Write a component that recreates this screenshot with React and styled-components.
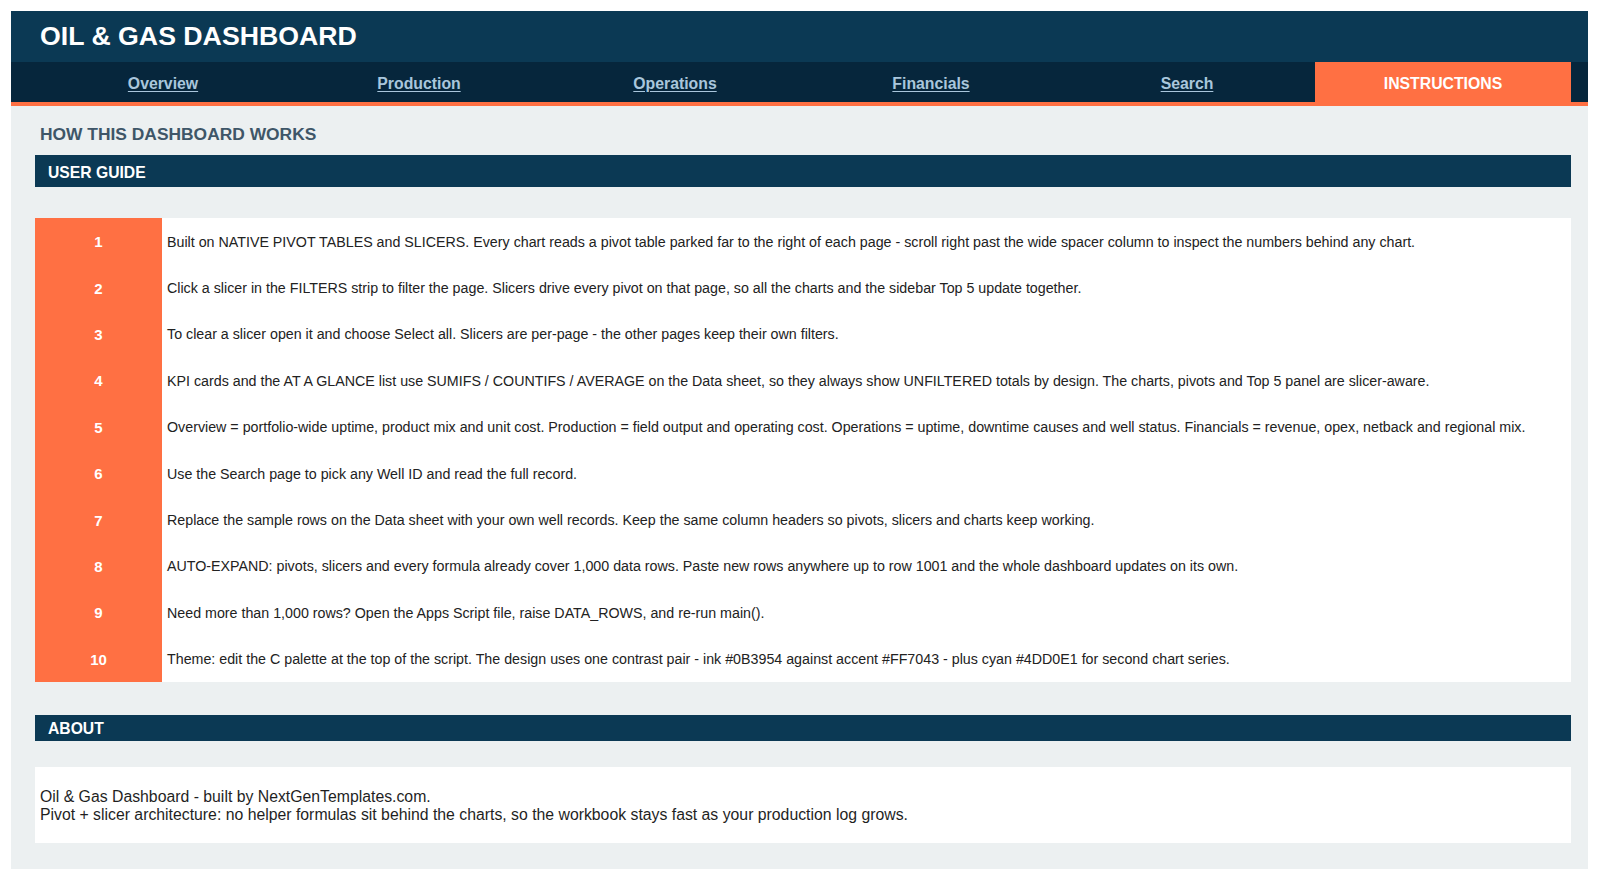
import React from 'react';
import styled, { createGlobalStyle } from 'styled-components';

const GlobalStyle = createGlobalStyle`
  body {
    margin: 0;
    background: #ffffff;
    font-family: "Liberation Sans", Arial, sans-serif;
  }
`;

const Frame = styled.div`
  margin: 11px;
  width: 1577px;
  background: #ECF0F1;
  padding-bottom: 26px;
`;

const TitleBar = styled.header`
  height: 51px;
  display: flex;
  align-items: center;
  padding-left: 29px;
  background: #0B3954;
`;

const Title = styled.h1`
  margin: 0;
  color: #ffffff;
  font-size: 26.7px;
  font-weight: 700;
`;

const NavBar = styled.nav`
  display: flex;
  height: 40px;
  padding-left: 24px;
  background: #06263C;
  border-bottom: 4px solid #FF7043;
`;

const Tab = styled.a`
  width: 256px;
  display: flex;
  align-items: center;
  justify-content: center;
  padding-top: 3px;
  font-size: 15.8px;
  font-weight: 700;
  color: ${(p) => (p.$active ? '#ffffff' : '#A9C6DC')};
  background: ${(p) => (p.$active ? '#FF7043' : 'transparent')};
  text-decoration: ${(p) => (p.$active ? 'none' : 'underline')};
  text-underline-offset: 2px;
`;

const Content = styled.main`
  padding: 18px 17px 0 24px;
`;

const PageHeading = styled.h2`
  margin: 0 0 11px 5px;
  font-size: 17.4px;
  line-height: 20px;
  font-weight: 700;
  color: #3E5668;
`;

const SectionBar = styled.div`
  height: ${(p) => p.$height}px;
  margin-top: ${(p) => p.$gap || 0}px;
  display: flex;
  align-items: center;
  padding: ${(p) => p.$nudge}px 0 0 13px;
  box-sizing: border-box;
  background: #0B3954;
  color: #ffffff;
  font-size: 15.7px;
  font-weight: 700;
`;

const GuideList = styled.div`
  margin-top: 31px;
  display: grid;
  grid-auto-rows: 46.4px;
  background: #ffffff;
`;

const GuideRow = styled.div`
  display: grid;
  grid-template-columns: 127px 1fr;
  align-items: stretch;
`;

const StepNumber = styled.div`
  display: flex;
  align-items: center;
  justify-content: center;
  padding-top: 1px;
  background: #FF7043;
  color: #ffffff;
  font-size: 15px;
  font-weight: 700;
`;

const StepText = styled.div`
  display: flex;
  align-items: center;
  padding: 1px 0 0 5px;
  font-size: 14.25px;
  color: #222222;
`;

const AboutBox = styled.div`
  margin-top: 26px;
  padding: 21px 5px 19px;
  background: #ffffff;
  font-size: 15.8px;
  line-height: 18px;
  color: #1f1f1f;
`;

const tabs = ['Overview', 'Production', 'Operations', 'Financials', 'Search', 'INSTRUCTIONS'];

const steps = [
  'Built on NATIVE PIVOT TABLES and SLICERS. Every chart reads a pivot table parked far to the right of each page - scroll right past the wide spacer column to inspect the numbers behind any chart.',
  'Click a slicer in the FILTERS strip to filter the page. Slicers drive every pivot on that page, so all the charts and the sidebar Top 5 update together.',
  'To clear a slicer open it and choose Select all. Slicers are per-page - the other pages keep their own filters.',
  'KPI cards and the AT A GLANCE list use SUMIFS / COUNTIFS / AVERAGE on the Data sheet, so they always show UNFILTERED totals by design. The charts, pivots and Top 5 panel are slicer-aware.',
  'Overview = portfolio-wide uptime, product mix and unit cost. Production = field output and operating cost. Operations = uptime, downtime causes and well status. Financials = revenue, opex, netback and regional mix.',
  'Use the Search page to pick any Well ID and read the full record.',
  'Replace the sample rows on the Data sheet with your own well records. Keep the same column headers so pivots, slicers and charts keep working.',
  'AUTO-EXPAND: pivots, slicers and every formula already cover 1,000 data rows. Paste new rows anywhere up to row 1001 and the whole dashboard updates on its own.',
  'Need more than 1,000 rows? Open the Apps Script file, raise DATA_ROWS, and re-run main().',
  'Theme: edit the C palette at the top of the script. The design uses one contrast pair - ink #0B3954 against accent #FF7043 - plus cyan #4DD0E1 for second chart series.',
];

const App = () => {
  return (
    <>
      <GlobalStyle />
      <Frame>
        <TitleBar>
          <Title>OIL &amp; GAS DASHBOARD</Title>
        </TitleBar>
        <NavBar>
          {tabs.map((t) => (
            <Tab key={t} $active={t === 'INSTRUCTIONS'}>{t}</Tab>
          ))}
        </NavBar>
        <Content>
          <PageHeading>HOW THIS DASHBOARD WORKS</PageHeading>
          <SectionBar $height={32} $nudge={3}>USER GUIDE</SectionBar>
          <GuideList>
            {steps.map((s, i) => (
              <GuideRow key={i}>
                <StepNumber>{i + 1}</StepNumber>
                <StepText>{s}</StepText>
              </GuideRow>
            ))}
          </GuideList>
          <SectionBar $height={26} $gap={33} $nudge={2}>ABOUT</SectionBar>
          <AboutBox>
            Oil &amp; Gas Dashboard - built by NextGenTemplates.com.
            <br />
            Pivot + slicer architecture: no helper formulas sit behind the charts, so the workbook stays fast as your production log grows.
          </AboutBox>
        </Content>
      </Frame>
    </>
  );
};

export default App;
